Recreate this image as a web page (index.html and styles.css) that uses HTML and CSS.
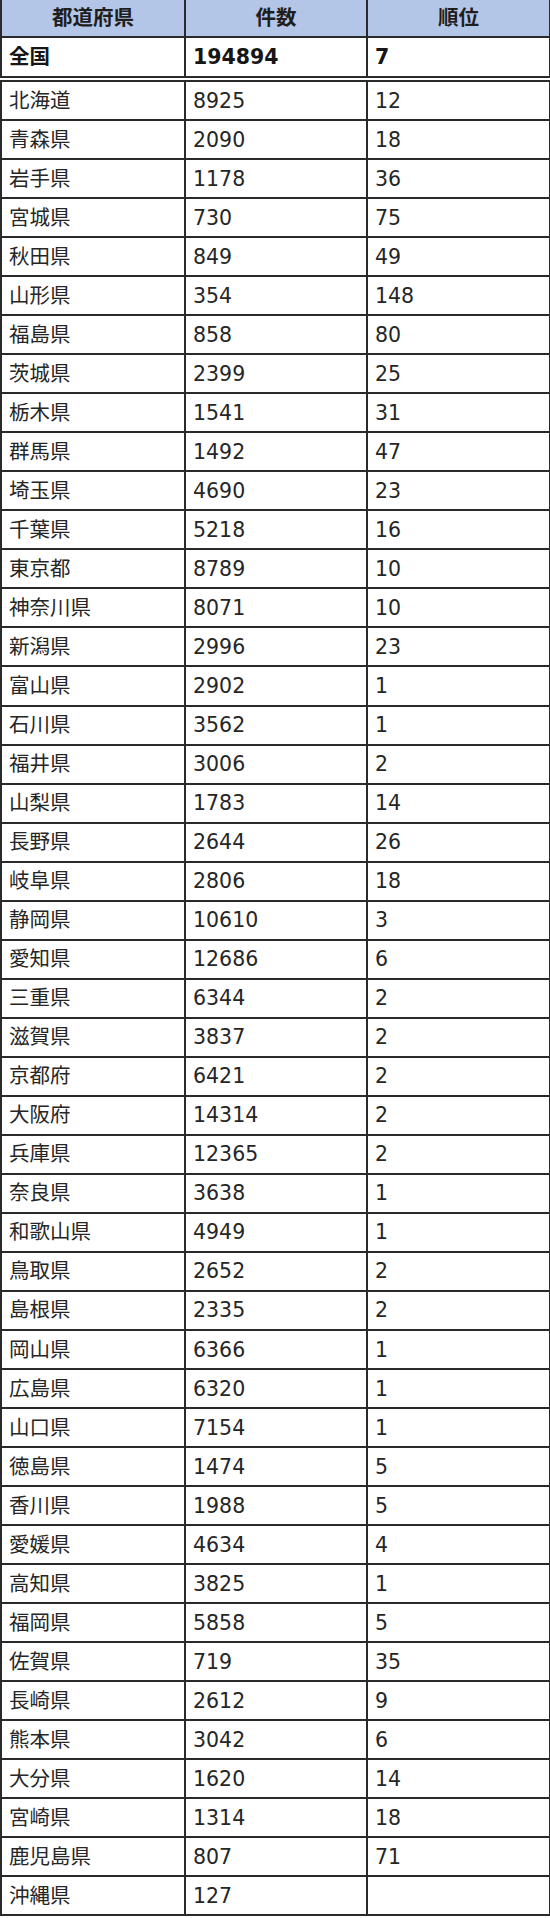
FILE: index.html
```html
<!DOCTYPE html>
<html lang="ja">
<head>
<meta charset="utf-8">
<title>都道府県別 件数と順位</title>
<link rel="stylesheet" href="styles.css">
</head>
<body>
<table class="data">
  <colgroup>
    <col class="c1"><col class="c2"><col class="c3">
  </colgroup>
  <thead>
    <tr class="head"><th>都道府県</th><th>件数</th><th>順位</th></tr>
  </thead>
  <tbody>
    <tr class="total"><td>全国</td><td>194894</td><td>7</td></tr>
    <tr><td>北海道</td><td>8925</td><td>12</td></tr>
    <tr><td>青森県</td><td>2090</td><td>18</td></tr>
    <tr><td>岩手県</td><td>1178</td><td>36</td></tr>
    <tr><td>宮城県</td><td>730</td><td>75</td></tr>
    <tr><td>秋田県</td><td>849</td><td>49</td></tr>
    <tr><td>山形県</td><td>354</td><td>148</td></tr>
    <tr><td>福島県</td><td>858</td><td>80</td></tr>
    <tr><td>茨城県</td><td>2399</td><td>25</td></tr>
    <tr><td>栃木県</td><td>1541</td><td>31</td></tr>
    <tr><td>群馬県</td><td>1492</td><td>47</td></tr>
    <tr><td>埼玉県</td><td>4690</td><td>23</td></tr>
    <tr><td>千葉県</td><td>5218</td><td>16</td></tr>
    <tr><td>東京都</td><td>8789</td><td>10</td></tr>
    <tr><td>神奈川県</td><td>8071</td><td>10</td></tr>
    <tr><td>新潟県</td><td>2996</td><td>23</td></tr>
    <tr><td>富山県</td><td>2902</td><td>1</td></tr>
    <tr><td>石川県</td><td>3562</td><td>1</td></tr>
    <tr><td>福井県</td><td>3006</td><td>2</td></tr>
    <tr><td>山梨県</td><td>1783</td><td>14</td></tr>
    <tr><td>長野県</td><td>2644</td><td>26</td></tr>
    <tr><td>岐阜県</td><td>2806</td><td>18</td></tr>
    <tr><td>静岡県</td><td>10610</td><td>3</td></tr>
    <tr><td>愛知県</td><td>12686</td><td>6</td></tr>
    <tr><td>三重県</td><td>6344</td><td>2</td></tr>
    <tr><td>滋賀県</td><td>3837</td><td>2</td></tr>
    <tr><td>京都府</td><td>6421</td><td>2</td></tr>
    <tr><td>大阪府</td><td>14314</td><td>2</td></tr>
    <tr><td>兵庫県</td><td>12365</td><td>2</td></tr>
    <tr><td>奈良県</td><td>3638</td><td>1</td></tr>
    <tr><td>和歌山県</td><td>4949</td><td>1</td></tr>
    <tr><td>鳥取県</td><td>2652</td><td>2</td></tr>
    <tr><td>島根県</td><td>2335</td><td>2</td></tr>
    <tr><td>岡山県</td><td>6366</td><td>1</td></tr>
    <tr><td>広島県</td><td>6320</td><td>1</td></tr>
    <tr><td>山口県</td><td>7154</td><td>1</td></tr>
    <tr><td>徳島県</td><td>1474</td><td>5</td></tr>
    <tr><td>香川県</td><td>1988</td><td>5</td></tr>
    <tr><td>愛媛県</td><td>4634</td><td>4</td></tr>
    <tr><td>高知県</td><td>3825</td><td>1</td></tr>
    <tr><td>福岡県</td><td>5858</td><td>5</td></tr>
    <tr><td>佐賀県</td><td>719</td><td>35</td></tr>
    <tr><td>長崎県</td><td>2612</td><td>9</td></tr>
    <tr><td>熊本県</td><td>3042</td><td>6</td></tr>
    <tr><td>大分県</td><td>1620</td><td>14</td></tr>
    <tr><td>宮崎県</td><td>1314</td><td>18</td></tr>
    <tr><td>鹿児島県</td><td>807</td><td>71</td></tr>
    <tr><td>沖縄県</td><td>127</td><td></td></tr>
  </tbody>
</table>
</body>
</html>
```
FILE: styles.css
```css
html, body {
  margin: 0;
  padding: 0;
  background: #ffffff;
}

.data {
  border-collapse: collapse;
  table-layout: fixed;
  width: 549px;
  font-family: "DejaVu Sans", "Noto Sans CJK JP", sans-serif;
  font-size: 20.5px;
  color: #262626;
}

.c1 { width: 184px; }
.c2 { width: 182px; }
.c3 { width: 183px; }

.data th,
.data td {
  border: 2px solid #2a2a2a;
  padding: 0 0 0 7px;
  height: 37.04px;
  line-height: 24px;
  text-align: left;
  vertical-align: middle;
  white-space: nowrap;
}

.head th {
  background: #b4c6e7;
  border-top: none;
  font-weight: bold;
  text-align: center;
  padding: 0;
  height: 36px;
  color: #1e1e1e;
}

.total td {
  font-weight: bold;
  color: #161616;
  border-bottom: 6px double #2a2a2a;
  height: 38px;
}
```
